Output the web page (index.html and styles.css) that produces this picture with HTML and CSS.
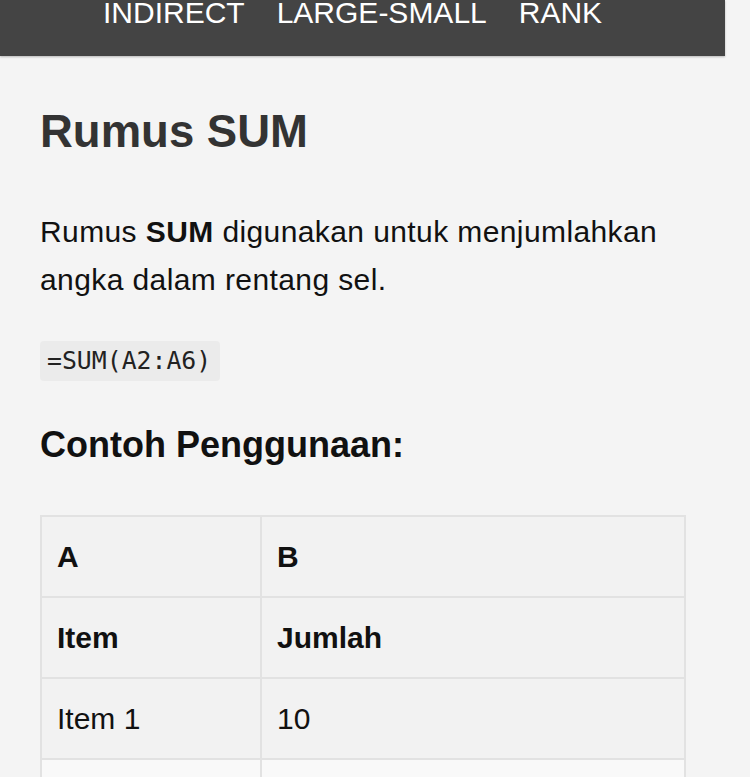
FILE: index.html
```html
<!DOCTYPE html>
<html lang="id">
<head>
<meta charset="utf-8">
<title>Rumus SUM</title>
<link rel="stylesheet" href="styles.css">
</head>
<body>
<div class="page">
  <header class="site-header">
    <nav class="nav">
      <a href="#">INDIRECT</a>
      <a href="#">LARGE-SMALL</a>
      <a href="#">RANK</a>
    </nav>
  </header>
  <main class="content">
    <h1 class="title">Rumus SUM</h1>
    <p class="text">Rumus <strong>SUM</strong> digunakan untuk menjumlahkan angka dalam rentang sel.</p>
    <div class="code-wrap"><code class="code">=SUM(A2:A6)</code></div>
    <h2 class="subtitle">Contoh Penggunaan:</h2>
    <table class="data">
      <tr class="bold"><td class="c1">A</td><td>B</td></tr>
      <tr class="bold"><td class="c1">Item</td><td>Jumlah</td></tr>
      <tr><td class="c1">Item 1</td><td>10</td></tr>
      <tr class="light"><td class="c1">Item 2</td><td>20</td></tr>
      <tr><td class="c1">Item 3</td><td>30</td></tr>
      <tr class="light"><td class="c1">Item 4</td><td>40</td></tr>
      <tr><td class="c1">Item 5</td><td>50</td></tr>
    </table>
  </main>
</div>
</body>
</html>
```
FILE: styles.css
```css
html, body {
  margin: 0;
  padding: 0;
  background: #f4f4f4;
}
body {
  font-family: "Liberation Sans", Arial, sans-serif;
  color: #111;
  overflow: hidden;
}
.page {
  width: 725px;
}
.site-header {
  background: #444;
  height: 56px;
  overflow: hidden;
  box-shadow: 0 1px 2px rgba(0, 0, 0, 0.25);
}
.nav {
  display: flex;
  gap: 32px;
  padding-left: 103px;
  margin-top: -2px;
  font-size: 30px;
  line-height: 30px;
}
.nav a {
  color: #fff;
  text-decoration: none;
}
.content {
  padding: 0 40px;
}
.title {
  margin: 49px 0 0;
  font-size: 45.5px;
  line-height: 54px;
  font-weight: bold;
  color: #333;
}
.text {
  margin: 49px 0 0;
  font-size: 30px;
  letter-spacing: 0.4px;
  line-height: 48px;
}
.code-wrap {
  margin-top: 37px;
}
.code {
  display: inline-block;
  background: #ebebeb;
  border-radius: 4px;
  padding: 4px 9px 4px 7px;
  font-family: "DejaVu Sans Mono", "Liberation Mono", monospace;
  font-size: 24.8px;
  line-height: 32px;
  color: #222;
}
.subtitle {
  margin: 42px 0 0;
  font-size: 36px;
  line-height: 43px;
  font-weight: bold;
}
.data {
  margin-top: 49px;
  width: 646px;
  border-collapse: collapse;
  font-size: 30px;
}
.data td {
  border: 2px solid #e2e2e2;
  background: #f2f2f2;
  height: 81px;
  padding: 0 15px;
  vertical-align: middle;
  box-sizing: border-box;
}
.data .c1 {
  width: 220px;
}
.data .bold td {
  font-weight: bold;
}
.data .light td {
  background: #f9f9f9;
}
```
